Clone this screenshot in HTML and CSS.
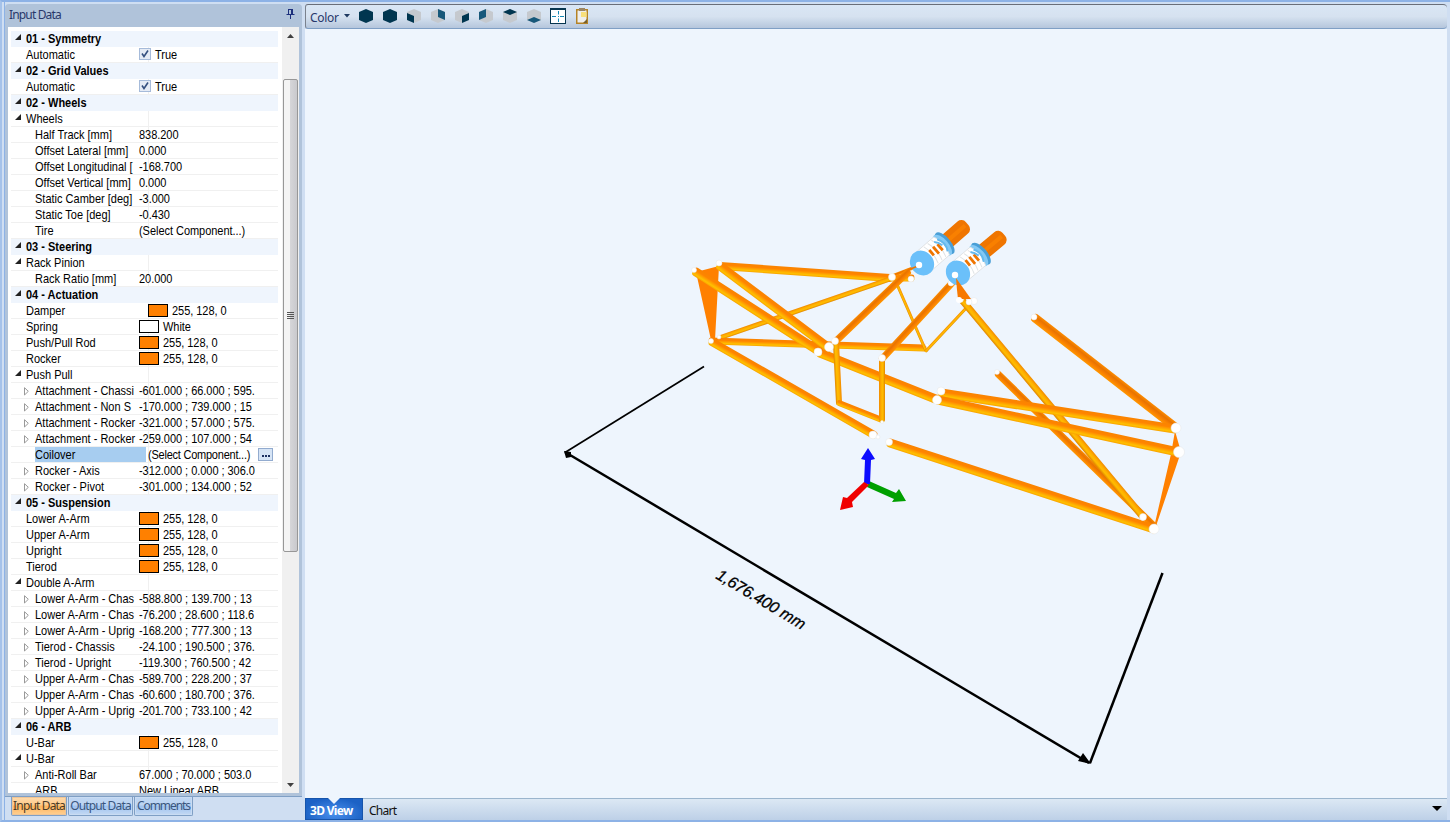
FILE: index.html
```html
<!DOCTYPE html>
<html lang="en">
<head>
<meta charset="utf-8">
<title>Suspension Design</title>
<link rel="stylesheet" href="styles.css">
</head>
<body>
<div class="app">
  <aside class="side">
    <div class="panel">
      <header class="panel-head"><span>Input Data</span>
        <svg class="pin" width="9" height="10" viewBox="0 0 9 10"><path d="M2.500 0V5.500M2 .5H6.500M5.500 0V5.500M6.500 0V5.500M.5 5.500H8.500M4.500 6V10" fill="none" stroke="#1c2f7c"/></svg>
      </header>
      <div class="panel-body">
        <div class="grid" id="grid"></div>
        <div class="scroll">
          <svg class="arrow" width="7" height="4"><path d="M0 4L3.500 0L7 4z"/></svg>
          <div class="thumb"><i></i><i></i><i></i><i></i></div>
          <svg class="arrow down" width="7" height="4"><path d="M0 0L3.500 4L7 0z"/></svg>
        </div>
      </div>
    </div>
    <nav class="tabs"><span class="tab active">Input Data</span><span class="tab out">Output Data</span><span class="tab com">Comments</span></nav>
  </aside>
  <main class="main">
    <div class="toolbar">
      <span class="color">Color</span>
      <svg class="drop" width="6" height="4"><path d="M0 0H6L3 3.500z"/></svg>
      <svg class="cube" viewBox="0 0 14 14"><path class="dk" d="M7 0L14 3V11L7 14L0 11V3z"/></svg>
      <svg class="cube" viewBox="0 0 14 14"><path class="dk" d="M7 0L14 3V11L7 14L0 11V3z"/></svg>
      <svg class="cube" viewBox="0 0 14 14"><path class="lt" d="M7 0L14 3V11L7 14L0 11V3z"/><path class="dk" d="M0 4L7 7V14L0 11z"/></svg>
      <svg class="cube" viewBox="0 0 14 14"><path class="lt" d="M7 0L14 3V11L7 14L0 11V3z"/><path class="md" d="M7 0L14 3V11L7 8z"/></svg>
      <svg class="cube" viewBox="0 0 14 14"><path class="lt" d="M7 0L14 3V11L7 14L0 11V3z"/><path class="dk" d="M14 4L7 7V14L14 11z"/></svg>
      <svg class="cube" viewBox="0 0 14 14"><path class="lt" d="M7 0L14 3V11L7 14L0 11V3z"/><path class="md" d="M7 0L0 3V11L7 8z"/></svg>
      <svg class="cube" viewBox="0 0 14 14"><path class="lt" d="M7 0L14 3V11L7 14L0 11V3z"/><path class="dk" d="M7 0L14 3L7 6L0 3z"/></svg>
      <svg class="cube" viewBox="0 0 14 14"><path class="lt" d="M7 0L14 3V11L7 14L0 11V3z"/><path class="md" d="M7 8L14 11L7 14L0 11z"/></svg>
      <svg class="fit" width="16" height="16"><path fill="#fff" d="M0 0H16V16H0z"/><path fill="#06354f" d="M0 0H16V2H0zM0 15H16V16H0zM0 0H1V16H0zM15 0H16V16H15z"/><path d="M2 8.500H6M10 8.500H14M8.500 3V6.500M8.500 10.500V14M8 8.500H9" stroke="#168ab8" fill="none"/></svg>
      <svg class="clip" width="12" height="16"><path d="M.75 1.750H11.250V15.250H.75z" fill="#eee" stroke="#b58326" stroke-width="1.500"/><path d="M5 4H10.500V9H5z" fill="#f8df7c"/><path d="M3 0H9V3H3z" fill="#9a8564"/><path d="M7 15L11 11V15z" fill="#77612c"/></svg>
    </div>
    <div class="view">
      <svg id="scene" width="1142" height="769" viewBox="305 29 1142 769">
        <defs>
          <linearGradient id="warm" x1="0" y1="0" x2="0" y2="1"><stop offset="0" stop-color="#f98400"/><stop offset=".35" stop-color="#ff8400"/><stop offset=".6" stop-color="#ffa600"/><stop offset=".8" stop-color="#ffc000"/><stop offset="1" stop-color="#f9a200"/></linearGradient>
          <linearGradient id="deep" x1="0" y1="0" x2="0" y2="1"><stop offset="0" stop-color="#fd8c00"/><stop offset=".35" stop-color="#e87300"/><stop offset=".65" stop-color="#f98000"/><stop offset="1" stop-color="#ff9800"/></linearGradient>
          <linearGradient id="gold" x1="0" y1="0" x2="0" y2="1"><stop offset="0" stop-color="#f08a00"/><stop offset=".35" stop-color="#ffae00"/><stop offset=".65" stop-color="#ffbd00"/><stop offset="1" stop-color="#e08400"/></linearGradient>
        </defs>
        <g stroke="#000" fill="none"><path stroke-width="1.700" d="M704 366.500L565 452.500"/><path stroke-width="2.500" d="M565 452L1089 763"/><path stroke-width="2.500" d="M1090 763L1162.500 573"/></g>
        <path d="M564 451L571 452L571 457L566 458zM1091 764L1078 761L1083 753z"/>
        <text class="dim" transform="translate(715 578) rotate(31)" textLength="101">1,676.400 mm</text>
        <path fill="#ff8000" d="M696 272L719 266L715 340L711 340zM1175 431L1181 452L1156 526L1155 523L1171 454z"/>
        <g id="rods"></g>
        <g id="joints"></g>
        <g id="dampers"></g>
        <path fill="#f77900" d="M956 278L971 299L958 299L957 290z"/>
        <circle cx="955" cy="275" r="3.200" fill="#fff"/><circle cx="959" cy="300" r="3" fill="#fff"/>
        <path fill="#00a000" d="M869 481L896 493L899 489L906 501L892 502L894 499L867 487z"/>
        <path fill="#0c0cff" d="M864 484L865 460L861 459L868 448L875 459L871 460L870 484z"/>
        <path fill="#f00000" d="M864 482L869 485L852 502L853 507L840 510L843 497L847 498z"/>
      </svg>
    </div>
    <nav class="view-tabs"><span class="view-tab active">3D View</span><span class="view-tab">Chart</span>
      <svg class="more" width="10" height="6"><path d="M0 0H10L5 5z"/></svg></nav>
  </main>
</div>
<script src="app.js"></script>
</body>
</html>
```
FILE: styles.css
```css
* { box-sizing: border-box; }
body { margin: 0; font-family: "Liberation Sans", Arial, sans-serif; }
.app { width: 1450px; height: 822px; overflow: hidden; display: flex; background: #cfdef2; border-top: 2px solid #8db2e6; border-bottom: 2px solid #8db2e6; border-left: 2px solid #a5c2ea; }
.side { width: 297px; margin-left: 3px; padding-top: 2px; display: flex; flex-direction: column; flex: none; box-shadow: -1px 0 #8db2e6; }
.panel { height: 793px; background: #b0c3da; border-radius: 4px 4px 0 0; border-bottom: 1px solid #7f9fc5; padding: 0 3px 3px; display: flex; flex-direction: column; }
.panel-head { height: 23px; display: flex; justify-content: space-between; align-items: center; padding: 0 4px 2px 1px; color: #28386b; font: 12px "Noto Sans", sans-serif; }
.panel-head span { letter-spacing: -.85px; }
.pin { margin: 0 0 2px; }
.panel-body { flex: 1; min-height: 0; background: #fff; display: flex; }
.grid { width: 268px; margin-left: 3px; padding-top: 4px; overflow: hidden; height: 766px; font-size: 11px; }
.row { height: 16px; display: flex; border-bottom: 1px solid #f0f0f0; white-space: pre; line-height: 16px; }
.row.head { background: #eff5fd; border-bottom-color: #eff5fd; font-weight: bold; }
.tog { width: 15px; flex: none; display: flex; padding: 3px 0 0 4px; }
.tog.sub { width: 24px; padding: 4px 0 0 13px; }
.name { flex: none; width: 113px; }
.name.sub { width: 104px; }
.row.head .name { width: auto; }
.name b, .val b { font-weight: inherit; display: inline-block; transform: translateY(-.5px) scaleY(1.1); transform-origin: 0 70%; }
.val { flex: 1; display: flex; align-items: flex-start; letter-spacing: -.04px; background: linear-gradient(90deg, transparent 9px, #f0f0f0 9px, #f0f0f0 10px, transparent 10px); }
.swatch { width: 20px; height: 13px; margin: 1px 4px 0 0; border: 1px solid #000; background: #ff8000; flex: none; }
.swatch.white { background: #fff; }
.shift { padding-left: 9px; }
.check { width: 12px; height: 12px; margin: 1px 4px 0 0; border: 1px solid #a6bbda; background: #e5ebf5; flex: none; }
.selected .name { background: #a7cdf0; width: 111px; margin-right: -7px; }
.selected .val { letter-spacing: -.23px; }
.ellipsis { width: 15px; height: 13px; margin: 1px 0 0 8px; border: 1px solid #92abcf; background: #d6e4f5; display: flex; gap: 1px; align-items: center; justify-content: center; }
.ellipsis i { width: 2px; height: 2px; background: #1c2f60; margin-top: 2px; }
.scroll { width: 17px; margin-left: 4px; background: #f0f0f0; display: flex; flex-direction: column; align-items: center; padding: 7px 0 6px; flex: none; }
.arrow { fill: #404040; flex: none; }
.thumb { width: 15px; height: 473px; margin-top: 41px; border: 1px solid #979797; border-radius: 2px; background: linear-gradient(90deg, #f4f4f4 45%, #d5d5d8 50%, #c9c9cd); display: flex; flex-direction: column; justify-content: center; align-items: center; gap: 1px; }
.thumb i { width: 7px; height: 1px; background: #555; }
.arrow.down { margin-top: auto; }
.tabs { display: flex; padding-left: 6px; gap: 1px; }
.tab { width: 56px; height: 19px; border: 1px solid #7f9fc5; border-top: 0; border-radius: 0 0 2px 2px; text-align: center; color: #39567e; font: 12px/18px "Noto Sans", sans-serif; letter-spacing: -.85px; background: linear-gradient(#bfd6f2, #bcd4f3 45%, #9fc2ef 50%, #c4d9f3); box-shadow: inset 0 0 0 1px #c9dcf3; white-space: nowrap; }
.tab.active { color: #4c3b25; background: linear-gradient(#ffdcae, #ffc988 45%, #ffb45c 50%, #ffd093); box-shadow: inset 0 0 0 1px #efc596; }
.tab.out { width: 65px; }
.tab.com { width: 59px; letter-spacing: -1.05px; }
.main { width: 1142px; margin: 2px 0 0 3px; display: flex; flex-direction: column; flex: none; }
.toolbar { height: 25px; border-top: 1px solid #696e79; border-bottom: 1px solid #7f9fc5; border-left: 1px solid #7a818d; border-radius: 3px 4px 4px 3px; background: linear-gradient(#d9e6f5, #d6e2f0 50%, #b5c6dc); display: flex; align-items: center; padding: 0 0 1px 4px; }
.color { width: 34px; padding-top: 2px; font: 12px "Noto Sans", sans-serif; letter-spacing: -.3px; color: #28386b; }
.drop { fill: #1e3960; margin-right: 9px; }
.cube { width: 14px; height: 14px; margin-right: 10px; }
.dk { fill: #003650; } .md { fill: #17587a; } .lt { fill: #c5c9ce; }
.fit { margin: 0 10px 0 -1px; }
.view { height: 769px; background: #eef5fd; }
.view svg { display: block; }
.dim { font: italic 16px "Liberation Sans", Arial, sans-serif; stroke: #000; stroke-width: .3px; }
.view-tabs { height: 22px; border-top: 1px solid #9bb5cd; background: linear-gradient(#dce8f4, #bdd0e7); display: flex; align-items: stretch; }
.view-tab { padding: 4px 0 0 6px; font: 12px/16px "Noto Sans", sans-serif; letter-spacing: -.75px; color: #111; }
.view-tab.active { width: 58px; margin-top: -1px; padding: 4px 0 0 4px; position: relative; color: #fff; font-weight: bold; letter-spacing: -.7px; background: radial-gradient(ellipse at 50% 70%, #4a91ee, #1c62c5 75%); border: 1px solid #1654ab; }
.view-tab.active::before { content: ""; position: absolute; left: 22px; top: -1px; border: 6px solid transparent; border-top-color: #eef5fd; border-bottom: 0; }
.more { margin: 7px 5px 0 auto; }
```
FILE: app.js
```js
// kind | name | value ; kinds: H category, G open group, R row, S child row, X expandable child, C selected child
const rows = `H|01 - Symmetry
R|Automatic|check
H|02 - Grid Values
R|Automatic|check
H|02 - Wheels
G|Wheels|
S|Half Track [mm]|838.200
S|Offset Lateral [mm]|0.000
S|Offset Longitudinal [|-168.700
S|Offset Vertical [mm]|0.000
S|Static Camber [deg]|-3.000
S|Static Toe [deg]|-0.430
S|Tire|(Select Component...)
H|03 - Steering
G|Rack Pinion|
S|Rack Ratio [mm]|20.000
H|04 - Actuation
R|Damper|shift
R|Spring|white
R|Push/Pull Rod|orange
R|Rocker|orange
G|Push Pull|
X|Attachment - Chassi|-601.000 ; 66.000 ; 595.
X|Attachment - Non S|-170.000 ; 739.000 ; 15
X|Attachment - Rocker|-321.000 ; 57.000 ; 575.
X|Attachment - Rocker|-259.000 ; 107.000 ; 54
C|Coilover|(Select Component...)
X|Rocker - Axis|-312.000 ; 0.000 ; 306.0
X|Rocker - Pivot|-301.000 ; 134.000 ; 52
H|05 - Suspension
R|Lower A-Arm|orange
R|Upper A-Arm|orange
R|Upright|orange
R|Tierod|orange
G|Double A-Arm|
X|Lower A-Arm - Chas|-588.800 ; 139.700 ; 13
X|Lower A-Arm - Chas|-76.200 ; 28.600 ; 118.6
X|Lower A-Arm - Uprig|-168.200 ; 777.300 ; 13
X|Tierod - Chassis|-24.100 ; 190.500 ; 376.
X|Tierod - Upright|-119.300 ; 760.500 ; 42
X|Upper A-Arm - Chas|-589.700 ; 228.200 ; 37
X|Upper A-Arm - Chas|-60.600 ; 180.700 ; 376.
X|Upper A-Arm - Uprig|-201.700 ; 733.100 ; 42
H|06 - ARB
R|U-Bar|orange
G|U-Bar|
X|Anti-Roll Bar|67.000 ; 70.000 ; 503.0
S|ARB|New Linear ARB`.split('\n').map(r => r.split('|'));

const open = '<svg width="6" height="6"><path d="M6 0V6H0z" fill="#222"/></svg>';
const closed = '<svg width="5" height="9"><path d="M.5 .7V8L4.300 4.300z" fill="#fff" stroke="#999"/></svg>';
const value = v => {
  if (v === 'check') return '<i class="check"><svg width="10" height="10" style="display:block"><path d="M2 4.500L4 7.500L8 1.500" fill="none" stroke="#35507f" stroke-width="1.600"/></svg></i><b>True</b>';
  if (v === 'white') return '<i class="swatch white"></i><b>White</b>';
  if (v === 'orange' || v === 'shift') return '<i class="swatch"></i><b>255, 128, 0</b>';
  return `<b>${v}</b>`;
};
document.getElementById('grid').innerHTML = rows.map(([k, n, v]) => {
  const sub = 'SXC'.includes(k) ? ' sub' : '';
  const mark = 'HG'.includes(k) ? open : k === 'X' ? closed : '';
  const cls = k === 'H' ? ' head' : k === 'C' ? ' selected' : '';
  const val = k === 'H' ? '' : `<span class="val${v === 'shift' || k === 'C' ? ' shift' : ''}">${value(v)}${k === 'C' ? '<span class="ellipsis"><i></i><i></i><i></i></span>' : ''}</span>`;
  return `<div class="row${cls}"><span class="tog${sub}">${mark}</span><span class="name${sub}"><b>${n}</b></span>${val}</div>`;
}).join('');

// Rods: x1, y1, x2, y2, thickness, finish
const rods = [
  [720, 266, 890, 278, 8, 'warm'], [719, 338, 890, 279, 5, 'gold'],
  [711, 341, 924, 348, 7, 'warm'], [720, 266, 829, 348, 9, 'warm'],
  [696, 272, 820, 352, 9, 'warm'], [712, 342, 874, 435, 8, 'warm'],
  [820, 353, 938, 400, 9, 'warm'],
  [896, 282, 926, 351, 3, 'gold'], [926, 351, 969, 305, 3, 'gold'],
  [892, 278, 912, 278, 7, 'warm'], [892, 276, 918, 266, 3, 'deep'],
  [835, 342, 908, 272, 7, 'deep'], [836, 343, 839, 403, 6, 'gold'],
  [839, 403, 882, 420, 6, 'warm'], [882, 420, 882, 359, 6, 'gold'],
  [882, 359, 952, 283, 7, 'deep'],
  [998, 374, 1154, 526, 7, 'deep'], [962, 300, 1143, 517, 7, 'gold'],
  [1035, 318, 1175, 427, 9, 'deep'], [941, 393, 1175, 429, 9, 'warm'],
  [938, 400, 1178, 452, 9, 'warm'], [890, 443, 1154, 529, 9, 'warm']
];
document.getElementById('rods').innerHTML = rods.map(([x1, y1, x2, y2, w, f]) => {
  const len = Math.hypot(x2 - x1, y2 - y1), a = Math.atan2(y2 - y1, x2 - x1) * 180 / Math.PI;
  return `<rect x="${-w / 3}" y="${-w / 2}" width="${len + w / 1.5}" height="${w}" rx="${w / 3}" fill="url(#${f})" transform="translate(${x1} ${y1}) rotate(${a})"/>`;
}).join('');

// Ball joints: x, y, radius
const joints = [[694, 270, 2.5], [719, 263, 3], [711, 341, 2.5], [719, 337, 2], [829, 347, 4.5], [818, 352, 4],
  [835, 341, 3.5], [882, 358, 3.5], [892, 277, 3.5], [911, 279, 3], [873, 435, 4], [878, 437, 2], [889, 442, 3.5],
  [937, 400, 4.5], [941, 391, 4], [951, 283, 3], [960, 299, 3.5], [974, 301, 3.5], [969, 302, 3], [1034, 317, 3], [997, 372, 2.5],
  [1176, 428, 5], [1179, 452, 5.5], [1154, 529, 5], [1143, 517, 3.5], [927, 345, 1.5], [882, 422, 1.5]];
document.getElementById('joints').innerHTML = joints.map(([x, y, r]) => `<circle cx="${x}" cy="${y}" r="${r}" fill="#fff" stroke="#e3e4e6" stroke-width=".5"/>`).join('');

// Coilovers drawn along their own axis, base plate at the origin
const coil = (x, y, a) => `<g transform="translate(${x} ${y}) rotate(${a})">
  <rect x="26" y="-8" width="34" height="16" rx="6" fill="#ef7500"/><rect x="28" y="-2" width="29" height="4" fill="#f98000"/>
  <ellipse cx="30" cy="0" rx="6" ry="13.500" fill="#4a9fd6"/><ellipse cx="27" cy="0" rx="6" ry="13" fill="#83c9f5"/>
  <path d="M3 -12L26 -12Q32 0 26 12L3 12z" fill="#fff" stroke="#dcdfe1" stroke-width=".8"/>
  <path d="M12 -11Q16 0 12 11M17 -11Q21 0 17 11M22 -11Q26 0 22 11" fill="none" stroke="#dfe3e5"/>
  <path d="M14 -5V2M19 -5V4M24 -4V4" stroke="#ef7500" stroke-width="2.800"/><path d="M23 -8Q26 -5 27 0M27 -8Q32 0 27 8" fill="none" stroke="#65b9ed" stroke-width="2"/>
  <ellipse cx="0" cy="0" rx="11.500" ry="13" fill="#6bc0fa"/></g>`;
document.getElementById('dampers').innerHTML = coil(922, 263, -41) + coil(958, 273, -40) +
  '<path d="M908 270L918 266" stroke="#ef7500" stroke-width="1.500"/><circle cx="919" cy="265" r="3.200" fill="#fff"/>';
```
